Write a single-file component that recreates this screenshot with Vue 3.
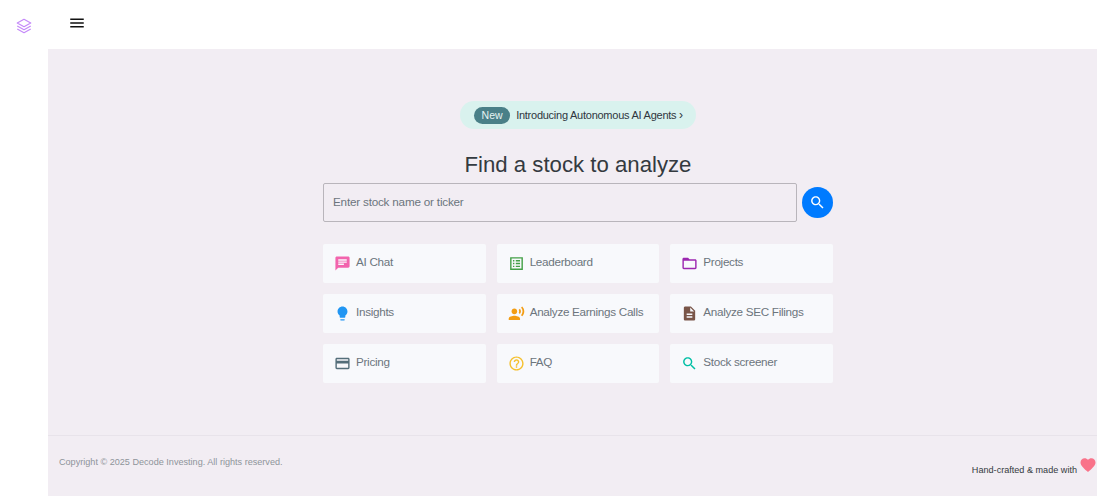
<template>
  <div class="app">
    <aside class="sidebar">
      <svg class="logo" viewBox="0 0 24 24" fill="none" stroke="#c58af9" stroke-width="1.6" stroke-linejoin="round">
        <path d="M12 3l9 5-9 5-9-5z" />
        <path d="M3 12l9 5 9-5" />
        <path d="M3 16l9 5 9-5" />
      </svg>
    </aside>

    <div class="content">
      <header class="topbar">
        <svg class="menu" viewBox="0 0 24 24"><path d="M3 18h18v-2H3v2zm0-5h18v-2H3v2zm0-7v2h18V6H3z" /></svg>
      </header>

      <main class="main">
        <section class="hero">
          <div class="promo">
            <span class="promo-badge">New</span>
            <span class="promo-text">Introducing Autonomous AI Agents <b>›</b></span>
          </div>

          <h1>Find a stock to analyze</h1>

          <div class="search">
            <input type="text" placeholder="Enter stock name or ticker">
            <button class="search-btn" type="button">
              <svg viewBox="0 0 24 24"><path :d="icons.search" /></svg>
            </button>
          </div>

          <div class="links">
            <a v-for="link in links" :key="link.label" class="link-card" href="#">
              <svg viewBox="0 0 24 24" :fill="link.color"><path :d="link.icon" /></svg>
              <span>{{ link.label }}</span>
            </a>
          </div>
        </section>
      </main>

      <footer class="footer">
        <span class="copyright">Copyright © 2025 Decode Investing. All rights reserved.</span>
        <span class="made-with">
          Hand-crafted &amp; made with
          <svg viewBox="0 0 24 24"><path :d="icons.heart" /></svg>
        </span>
      </footer>
    </div>
  </div>
</template>

<script setup>
const icons = {
  search: 'M15.5 14h-.79l-.28-.27C15.41 12.59 16 11.11 16 9.5 16 5.91 13.09 3 9.5 3S3 5.91 3 9.5 5.91 16 9.5 16c1.61 0 3.09-.59 4.23-1.57l.27.28v.79l5 4.99L20.49 19l-4.99-5zm-6 0C7.01 14 5 11.99 5 9.5S7.01 5 9.5 5 14 7.01 14 9.5 11.99 14 9.5 14z',
  heart: 'M12 21.35l-1.45-1.32C5.4 15.36 2 12.28 2 8.5 2 5.42 4.42 3 7.5 3c1.74 0 3.41.81 4.5 2.09C13.09 3.81 14.76 3 16.5 3 19.58 3 22 5.42 22 8.5c0 3.78-3.4 6.86-8.55 11.54L12 21.35z'
}

const links = [
  { label: 'AI Chat', color: '#f264ad', icon: 'M20 2H4c-1.1 0-1.99.9-1.99 2L2 22l4-4h14c1.1 0 2-.9 2-2V4c0-1.1-.9-2-2-2zM6 9h12v2H6V9zm8 5H6v-2h8v2zm4-6H6V6h12v2z' },
  { label: 'Leaderboard', color: '#43a047', icon: 'M3 3h18v18H3V3zm2 2v14h14V5H5zm2 2h2v2H7V7zm4 0h6v2h-6V7zm-4 4h2v2H7v-2zm4 0h6v2h-6v-2zm-4 4h2v2H7v-2zm4 0h6v2h-6v-2z' },
  { label: 'Projects', color: '#9c27b0', icon: 'M20 6h-8l-2-2H4c-1.1 0-1.99.9-1.99 2L2 18c0 1.1.9 2 2 2h16c1.1 0 2-.9 2-2V8c0-1.1-.9-2-2-2zm0 12H4V8h16v10z' },
  { label: 'Insights', color: '#2196f3', icon: 'M9 21c0 .55.45 1 1 1h4c.55 0 1-.45 1-1v-1H9v1zm3-19C8.14 2 5 5.14 5 9c0 2.38 1.19 4.47 3 5.74V17c0 .55.45 1 1 1h6c.55 0 1-.45 1-1v-2.26c1.81-1.27 3-3.36 3-5.74 0-3.86-3.14-7-7-7z' },
  { label: 'Analyze Earnings Calls', color: '#f39c12', icon: 'M9 13c2.21 0 4-1.79 4-4s-1.79-4-4-4-4 1.79-4 4 1.79 4 4 4zm0 2c-2.67 0-8 1.34-8 4v2h16v-2c0-2.66-5.33-4-8-4zm7.76-9.64l-1.68 1.69c.84 1.18.84 2.71 0 3.89l1.68 1.69c2.02-2.02 2.02-5.07 0-7.27zM20.07 2l-1.63 1.63c2.77 3.02 2.77 7.56 0 10.74L20.07 16c3.9-3.89 3.91-9.95 0-14z' },
  { label: 'Analyze SEC Filings', color: '#795548', icon: 'M14 2H6c-1.1 0-1.99.9-1.99 2L4 20c0 1.1.89 2 1.99 2H18c1.1 0 2-.9 2-2V8l-6-6zm2 16H8v-2h8v2zm0-4H8v-2h8v2zm-3-5V3.5L18.5 9H13z' },
  { label: 'Pricing', color: '#546e7a', icon: 'M20 4H4c-1.11 0-1.99.89-1.99 2L2 18c0 1.11.89 2 2 2h16c1.11 0 2-.89 2-2V6c0-1.11-.89-2-2-2zm0 14H4v-6h16v6zm0-10H4V6h16v2z' },
  { label: 'FAQ', color: '#f5c02d', icon: 'M11 18h2v-2h-2v2zm1-16C6.48 2 2 6.48 2 12s4.48 10 10 10 10-4.48 10-10S17.52 2 12 2zm0 18c-4.41 0-8-3.59-8-8s3.59-8 8-8 8 3.59 8 8-3.59 8-8 8zm0-14c-2.21 0-4 1.79-4 4h2c0-1.1.9-2 2-2s2 .9 2 2c0 2-3 1.75-3 5h2c0-2.25 3-2.5 3-5 0-2.21-1.79-4-4-4z' },
  { label: 'Stock screener', color: '#00bfa5', icon: icons.search }
]
</script>

<style>
html,
body {
  margin: 0;
  height: 100%;
  overflow: hidden;
  background: #fff;
}
</style>

<style scoped>
.app {
  display: flex;
  height: 100vh;
  font-family: "Liberation Sans", Arial, sans-serif;
}

.sidebar {
  flex: 0 0 48px;
  display: flex;
  justify-content: center;
  padding-top: 17px;
  box-sizing: border-box;
  background: #fff;
}

.logo {
  width: 18px;
  height: 18px;
}

.content {
  flex: 1;
  min-width: 0;
  display: flex;
  flex-direction: column;
  background: #f2edf3;
}

.topbar {
  flex: 0 0 49px;
  display: flex;
  align-items: flex-start;
  padding: 14px 0 0 20px;
  box-sizing: border-box;
  background: #fff;
}

.menu {
  width: 18px;
  height: 18px;
  fill: #111;
}

.main {
  flex: 1;
  display: flex;
  justify-content: center;
  padding: 52px 0 0 11px;
  box-sizing: border-box;
}

.hero {
  width: 510px;
  display: flex;
  flex-direction: column;
  align-items: center;
}

.promo {
  display: flex;
  align-items: center;
  gap: 6px;
  height: 28px;
  padding: 0 13px 0 14px;
  border-radius: 14px;
  background: #d9f2ee;
  font-size: 11px;
  letter-spacing: -0.25px;
}

.promo-badge {
  width: 36px;
  height: 17px;
  line-height: 17px;
  border-radius: 9px;
  background: #4a8088;
  color: #e6f4f2;
  text-align: center;
  letter-spacing: 0;
  font-size: 10.5px;
}

.promo-text {
  color: #2f3640;
}

.promo-text b {
  font-size: 12px;
  line-height: 10px;
  font-weight: 400;
}

h1 {
  margin: 22px 0 4px;
  font-size: 22.2px;
  line-height: 28px;
  font-weight: 400;
  color: #343a40;
}

.search {
  width: 100%;
  display: flex;
  align-items: center;
  gap: 5px;
}

.search input {
  flex: 1;
  min-width: 0;
  height: 39px;
  padding: 0 9px 3px;
  box-sizing: border-box;
  border: 1px solid #b9b5bb;
  border-radius: 2px;
  background: transparent;
  font: 11.7px "Liberation Sans", Arial, sans-serif;
  letter-spacing: -0.2px;
  color: #495057;
  outline: none;
}

.search input::placeholder {
  color: #6c757d;
  opacity: 1;
}

.search-btn {
  flex: 0 0 31px;
  width: 31px;
  height: 31px;
  padding: 0;
  display: flex;
  align-items: center;
  justify-content: center;
  border: none;
  border-radius: 50%;
  background: #007bff;
}

.search-btn svg {
  width: 17px;
  height: 17px;
  fill: #fff;
}

.links {
  width: 100%;
  margin-top: 22px;
  display: grid;
  grid-template-columns: repeat(3, 1fr);
  gap: 11px 11px;
}

.link-card {
  height: 39px;
  display: flex;
  align-items: center;
  gap: 5px;
  padding: 0 11px;
  box-sizing: border-box;
  border-radius: 2px;
  background: #f8f9fc;
  color: #6c757d;
  font-size: 11.7px;
  letter-spacing: -0.3px;
  text-decoration: none;
}

.link-card span {
  margin-bottom: 5px;
}

.link-card svg {
  flex: none;
  width: 17px;
  height: 17px;
}

.footer {
  flex: 0 0 61px;
  display: flex;
  justify-content: space-between;
  padding: 0 0 0 11px;
  box-sizing: border-box;
  border-top: 1px solid #e8e3ea;
  font-size: 9.1px;
}

.copyright {
  margin-top: 21px;
  color: #8e949a;
}

.made-with {
  display: flex;
  align-items: flex-start;
  gap: 2px;
  margin-top: 28px;
  padding-top: 1px;
  color: #343a40;
}

.made-with svg {
  width: 18px;
  height: 18px;
  margin-top: -9px;
  fill: #f9738a;
}
</style>
